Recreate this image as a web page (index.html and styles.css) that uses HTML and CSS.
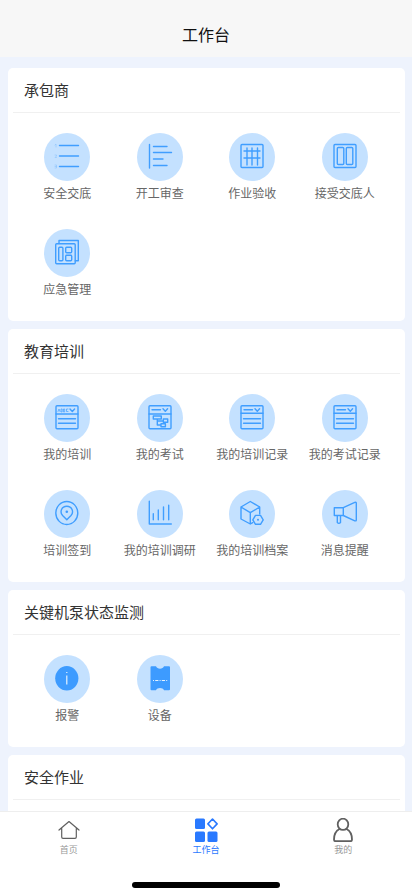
FILE: index.html
```html
<!DOCTYPE html>
<html lang="zh-CN">
<head>
<meta charset="utf-8">
<meta name="viewport" content="width=device-width, initial-scale=1">
<title>工作台</title>
<link rel="stylesheet" href="styles.css">
</head>
<body>
<header class="topbar"><h1>工作台</h1></header>
<main class="content">
  <section class="card">
    <h2>承包商</h2>
    <div class="grid">
      <a class="item" href="#"><svg class="icon" viewBox="0 0 46 48" aria-hidden="true"><path d="M15.500 12.500h19M15.500 23h19M15.500 33.500h19"/><path class="faint" d="M11 12l1-1v3M11 22h1.500v1L11 24.500h1.500M11 32h1.500v3H11M11 33.500h1.500"/></svg><span>安全交底</span></a>
      <a class="item" href="#"><svg class="icon" viewBox="0 0 46 48" aria-hidden="true"><path d="M12.500 11.500v23.500M16.500 13.500H30M16.500 19.500h18M16.500 26H26M16.500 32.500H30"/></svg><span>开工审查</span></a>
      <a class="item" href="#"><svg class="icon" viewBox="0 0 46 48" aria-hidden="true"><rect x="12" y="11.500" width="22" height="23" rx="1"/><path d="M18 15v17M23 15v17M28.500 15v17M15 18h16M15 25h16"/></svg><span>作业验收</span></a>
      <a class="item" href="#"><svg class="icon" viewBox="0 0 46 48" aria-hidden="true"><rect x="12" y="11.500" width="22" height="23" rx="1"/><rect x="15.300" y="14.500" width="6.500" height="17" rx="1"/><rect x="24.300" y="14.500" width="6.500" height="17" rx="1"/></svg><span>接受交底人</span></a>
      <a class="item" href="#"><svg class="icon" viewBox="0 0 46 48" aria-hidden="true"><rect x="11.700" y="14.700" width="19.500" height="20" rx="1"/><path d="M15 14.500v-3h19.300v20.200h-3"/><rect x="14.700" y="18.300" width="4.200" height="13.500" rx="1"/><rect x="21.700" y="18.300" width="6" height="5.500" rx="1"/><rect x="21.700" y="26.300" width="6" height="5.500" rx="1"/></svg><span>应急管理</span></a>
    </div>
  </section>
  <section class="card">
    <h2>教育培训</h2>
    <div class="grid">
      <a class="item" href="#"><svg class="icon" viewBox="0 0 46 48" aria-hidden="true"><rect x="12" y="11.700" width="22" height="23" rx="1"/><path d="M12 20h22M14.500 24.700h17M14.500 29.300h17M26 15l2.300 2.500 2.300-2.500"/><path class="thin" d="M14 17.500l1-2.500 1 2.500M17 17.500V15h1.200v2.500zM19.500 17.500V15h1.200v2.500zM24 15h-1.500v2.500H24"/></svg><span>我的培训</span></a>
      <a class="item" href="#"><svg class="icon" viewBox="0 0 46 48" aria-hidden="true"><rect x="12" y="11.700" width="22" height="23" rx="1"/><path d="M12 20h22M15 15.700h8.500M26 14.700l2.300 2.500 2.300-2.500"/><path d="M16.300 22h8v3h-8zM26.300 25h4.400v3.200h-4.400zM24 29.700h4.400v3H24zM20.300 25v6H24M20.300 27h6"/></svg><span>我的考试</span></a>
      <a class="item" href="#"><svg class="icon" viewBox="0 0 46 48" aria-hidden="true"><rect x="12" y="11.700" width="22" height="23" rx="1"/><path d="M12 19.300h22M15 15.700h8.500M26 14.700l2.300 2.500 2.300-2.500M14.500 24.700h17M14.500 29.300h17"/></svg><span>我的培训记录</span></a>
      <a class="item" href="#"><svg class="icon" viewBox="0 0 46 48" aria-hidden="true"><rect x="12" y="11.700" width="22" height="23" rx="1"/><path d="M12 19.300h22M15 15.700h8.500M26 14.700l2.300 2.500 2.300-2.500M14.500 24.700h17M14.500 29.300h17"/></svg><span>我的考试记录</span></a>
      <a class="item" href="#"><svg class="icon" viewBox="0 0 46 48" aria-hidden="true"><ellipse cx="22.800" cy="23" rx="11" ry="11.500"/><path d="M22.800 29.800l-4.200-4.300c-3.200-3.500-1-9.200 4.200-9.200s7.400 5.700 4.200 9.200z"/><circle class="solid" cx="22.800" cy="21.700" r="1.300"/></svg><span>培训签到</span></a>
      <a class="item" href="#"><svg class="icon" viewBox="0 0 46 48" aria-hidden="true"><path d="M12.300 11.300V34h22M16.300 23.700v6M21.300 20v9.700M26.500 17v12.700M31.700 15.300v14.400"/></svg><span>我的培训调研</span></a>
      <a class="item" href="#"><svg class="icon" viewBox="0 0 46 48" aria-hidden="true"><path d="M30.700 24v-7l-9.400-5.500L12 17v12l9.300 5V22.700L12 17M21.300 22.700l9.400-5.700M21.300 34l2.400-1.300"/><path d="M26.500 25.400h5l2.700 4.500-2.700 4.400h-5l-2.700-4.400z"/><circle class="solid" cx="29" cy="29.800" r="1"/></svg><span>我的培训档案</span></a>
      <a class="item" href="#"><svg class="icon" viewBox="0 0 46 48" aria-hidden="true"><path d="M12.300 17.700h9v7.800h-9zM21.300 17.700l11.500-5.300q1.500-.4 1.500 1v16.400q0 1.500-1.500 1l-11.500-5.300M15.300 25.500v7q1.600 1.800 3.200 0v-7"/></svg><span>消息提醒</span></a>
    </div>
  </section>
  <section class="card">
    <h2>关键机泵状态监测</h2>
    <div class="grid">
      <a class="item" href="#"><svg class="icon" viewBox="0 0 46 48" aria-hidden="true"><ellipse class="solid" cx="22.800" cy="23.300" rx="11.600" ry="12.200"/><path class="white" d="M22.800 20.500v9M22.800 17v1"/></svg><span>报警</span></a>
      <a class="item" href="#"><svg class="icon" viewBox="0 0 46 48" aria-hidden="true"><path class="solid" d="M14.500 11.300H19c1 3.200 7 3.200 8 0h5q1 0 1 1v22q0 1-1 1h-5c-1-3.200-7-3.200-8 0h-4.500q-1 0-1-1v-22q0-1 1-1z"/><path class="white" stroke-dasharray="1 1.200 3.200 1.200" d="M16 25.500h14.500"/></svg><span>设备</span></a>
    </div>
  </section>
  <section class="card">
    <h2>安全作业</h2>
    <div class="grid"></div>
  </section>
</main>
<nav class="tabbar">
  <div class="tabs">
    <a class="tab" href="#"><svg class="tab-icon home" viewBox="0 0 24 24" aria-hidden="true"><path d="M2 12L12 3.500 22 12M4.700 10v9q0 1.300 1.300 1.300h12q1.300 0 1.300-1.300v-9"/></svg><span>首页</span></a>
    <a class="tab active" href="#" aria-current="page"><svg class="tab-icon work" viewBox="0 0 24 24" aria-hidden="true"><rect x="1" y=".500" width="10" height="10.500" rx="1.500"/><rect x="1" y="13.500" width="10" height="10.500" rx="1.500"/><rect x="13.500" y="13.500" width="10" height="10.500" rx="1.500"/><path d="M18.500 1l4.600 4.900-4.600 4.900-4.600-4.900z"/></svg><span>工作台</span></a>
    <a class="tab" href="#"><svg class="tab-icon user" viewBox="0 0 24 24" aria-hidden="true"><ellipse cx="12" cy="6.300" rx="5.300" ry="5.600"/><path d="M8.500 11C4.500 13 3 16 3 21.500q0 1.700 1.500 1.700h15q1.500 0 1.500-1.700c0-5.500-1.500-8.500-5.500-10.500"/></svg><span>我的</span></a>
  </div>
  <div class="home-indicator"></div>
</nav>
</body>
</html>
```
FILE: styles.css
```css
* { box-sizing: border-box; }

body {
  margin: 0;
  height: 100vh;
  display: flex;
  flex-direction: column;
  background: #eef3fd;
  color: #333;
  font-family: "Noto Sans CJK SC", sans-serif;
}

a { color: inherit; text-decoration: none; }

.topbar {
  flex: none;
  padding: 22px 0 11px;
  background: #f7f7f7;
  text-align: center;
}

.topbar h1 {
  margin: 0;
  font-size: 16px;
  line-height: 24px;
  font-weight: 400;
  color: #111;
}

.content {
  flex: 1;
  min-height: 0;
  overflow-y: auto;
  scrollbar-width: none;
  padding: 11px 7px 8px 8px;
}

.card {
  margin-bottom: 8px;
  border-radius: 5px;
  background: #fff;
}

.card h2 {
  margin: 0 5px;
  padding: 0 11px;
  border-bottom: 1px solid #f0f0f0;
  font-size: 15px;
  line-height: 44px;
  font-weight: 400;
}

.grid {
  display: grid;
  grid-template-columns: repeat(4, 1fr);
  row-gap: 24px;
  padding: 20px 14px 20px 13px;
}

.item {
  display: flex;
  flex-direction: column;
  align-items: center;
  font-size: 12px;
  line-height: 24px;
  color: #666;
  white-space: nowrap;
}

.icon {
  width: 46px;
  height: 48px;
  border-radius: 50%;
  background: #c4e1ff;
  fill: none;
  stroke: #409eff;
  stroke-width: 1.4;
  stroke-linecap: round;
  stroke-linejoin: round;
}

.icon .solid { fill: #3d9bff; stroke: none; }
.icon .white { stroke: #e6f3ff; stroke-width: 1.2; stroke-linecap: butt; }
.icon .faint { stroke: #8dc3fb; stroke-width: 0.6; }
.icon .thin { stroke-width: 0.7; }

.tabbar {
  flex: none;
  padding: 6px 0 8px;
  border-top: 1px solid #eee;
  background: #fff;
}

.tabs {
  display: grid;
  grid-template-columns: repeat(3, 1fr);
}

.tab {
  display: flex;
  flex-direction: column;
  align-items: center;
  font-size: 9px;
  line-height: 16px;
  color: #999;
}

.tab.active { color: #2979ff; }

.tab-icon {
  width: 24px;
  height: 24px;
  fill: none;
  stroke: #606060;
  stroke-linejoin: round;
  stroke-linecap: round;
}

.home { stroke-width: 1.2; }
.user { stroke-width: 1.8; }
.work rect { fill: #2979ff; stroke: none; }
.work path { stroke: #2979ff; stroke-width: 1.6; }

.home-indicator {
  width: 36%;
  height: 6px;
  margin: 24px auto 0;
  border-radius: 3px;
  background: #000;
}
```
